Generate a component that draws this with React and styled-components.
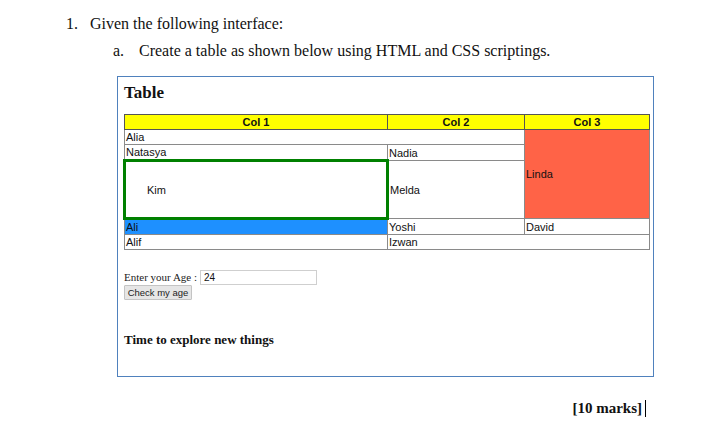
import styled, { createGlobalStyle } from "styled-components";

const GlobalStyle = createGlobalStyle`
  html, body {
    margin: 0;
    padding: 0;
    background: #ffffff;
  }
  body {
    font-family: "Liberation Serif", "Times New Roman", serif;
    color: #111111;
  }
`;

export default function App() {
  return (
    <Page>
      <GlobalStyle />
      <Item $indent={66} $label={24}>
        <span>1.</span>
        <span>Given the following interface:</span>
      </Item>
      <Item $indent={113} $label={26}>
        <span>a.</span>
        <span>Create a table as shown below using HTML and CSS scriptings.</span>
      </Item>

      <Frame>
        <Heading>Table</Heading>
        <Grid>
          <colgroup>
            <col style={{ width: 263 }} />
            <col style={{ width: 137 }} />
            <col style={{ width: 125 }} />
          </colgroup>
          <thead>
            <Row $h={15}>
              <Head>Col 1</Head>
              <Head>Col 2</Head>
              <Head>Col 3</Head>
            </Row>
          </thead>
          <tbody>
            <Row $h={15}>
              <Cell colSpan={2}>Alia</Cell>
              <Cell rowSpan={3} $bg="#ff6347">
                Linda
              </Cell>
            </Row>
            <Row $h={16}>
              <Cell>Natasya</Cell>
              <Cell>Nadia</Cell>
            </Row>
            <Row $h={58}>
              <KimCell>Kim</KimCell>
              <Cell>Melda</Cell>
            </Row>
            <Row $h={16}>
              <Cell $bg="#1e90ff">Ali</Cell>
              <Cell>Yoshi</Cell>
              <Cell>David</Cell>
            </Row>
            <Row $h={15}>
              <Cell>Alif</Cell>
              <Cell colSpan={2}>Izwan</Cell>
            </Row>
          </tbody>
        </Grid>

        <Form>
          <AgeLine>
            Enter your Age :
            <AgeInput defaultValue="24" />
          </AgeLine>
          <CheckButton>Check my age</CheckButton>
        </Form>

        <Explore>Time to explore new things</Explore>
      </Frame>

      <Marks>
        [10 marks]
        <Caret />
      </Marks>
    </Page>
  );
}

const Page = styled.div`
  width: 706px;
  height: 422px;
  padding-top: 10px;
  box-sizing: border-box;
  overflow: hidden;
`;

const Item = styled.div`
  display: grid;
  grid-template-columns: ${(p) => p.$label}px auto;
  padding-left: ${(p) => p.$indent}px;
  font-size: 16px;
  line-height: 27px;
  color: #111111;
`;

const Frame = styled.div`
  margin: 12px 0 0 117px;
  width: 537px;
  height: 301px;
  border: 1px solid #4f81bd;
  padding: 6px 0 0 5px;
  box-sizing: border-box;
  display: flex;
  flex-direction: column;
  align-items: flex-start;
`;

const Heading = styled.div`
  font-weight: bold;
  font-size: 17px;
  line-height: 20px;
  margin: 0 0 11px 1px;
  color: #111111;
`;

const Grid = styled.table`
  width: 525px;
  border-collapse: collapse;
  table-layout: fixed;
  font-family: "Liberation Sans", Arial, sans-serif;
  font-size: 11px;
  color: #111111;
  border: 1px solid #7d7d7d;
`;

const Row = styled.tr`
  height: ${(p) => p.$h}px;
`;

const Head = styled.th`
  background: #ffff00;
  border: 1px solid #555555;
  padding: 0;
  font-weight: bold;
  text-align: center;
  line-height: 12px;
`;

const Cell = styled.td`
  background: ${(p) => p.$bg || "#ffffff"};
  border: 1px solid #8a8a8a;
  padding: 0 1px;
  line-height: 12px;
  vertical-align: middle;
  white-space: nowrap;
`;

const KimCell = styled(Cell)`
  border: 3px solid #008000;
  padding-left: 21px;
`;

const Form = styled.div`
  margin-top: 19px;
  padding-left: 1px;
  display: flex;
  flex-direction: column;
  align-items: flex-start;
`;

const AgeLine = styled.label`
  display: flex;
  align-items: center;
  gap: 3px;
  font-size: 11px;
  line-height: 16px;
  color: #222222;
`;

const AgeInput = styled.input`
  width: 117px;
  height: 15px;
  box-sizing: border-box;
  border: 1px solid #cfcfcf;
  padding: 0 3px;
  font-family: "Liberation Sans", Arial, sans-serif;
  font-size: 10px;
  color: #111111;
  outline: none;
`;

const CheckButton = styled.button`
  margin-top: 0;
  width: 68px;
  height: 15px;
  padding: 0;
  border: 1px solid #c4c4c4;
  background: #e6e6e6;
  border-radius: 1px;
  font-family: "Liberation Sans", Arial, sans-serif;
  font-size: 9.5px;
  color: #222222;
`;

const Explore = styled.div`
  margin-top: 32px;
  padding-left: 1px;
  font-weight: bold;
  font-size: 13px;
  line-height: 16px;
  color: #111111;
`;

const Marks = styled.div`
  margin-top: 22px;
  display: flex;
  justify-content: flex-end;
  align-items: center;
  padding-right: 60px;
  font-weight: bold;
  font-size: 15px;
  line-height: 18px;
  color: #111111;
`;

const Caret = styled.span`
  display: inline-block;
  width: 1px;
  height: 17px;
  margin-left: 3px;
  background: #000000;
`;
